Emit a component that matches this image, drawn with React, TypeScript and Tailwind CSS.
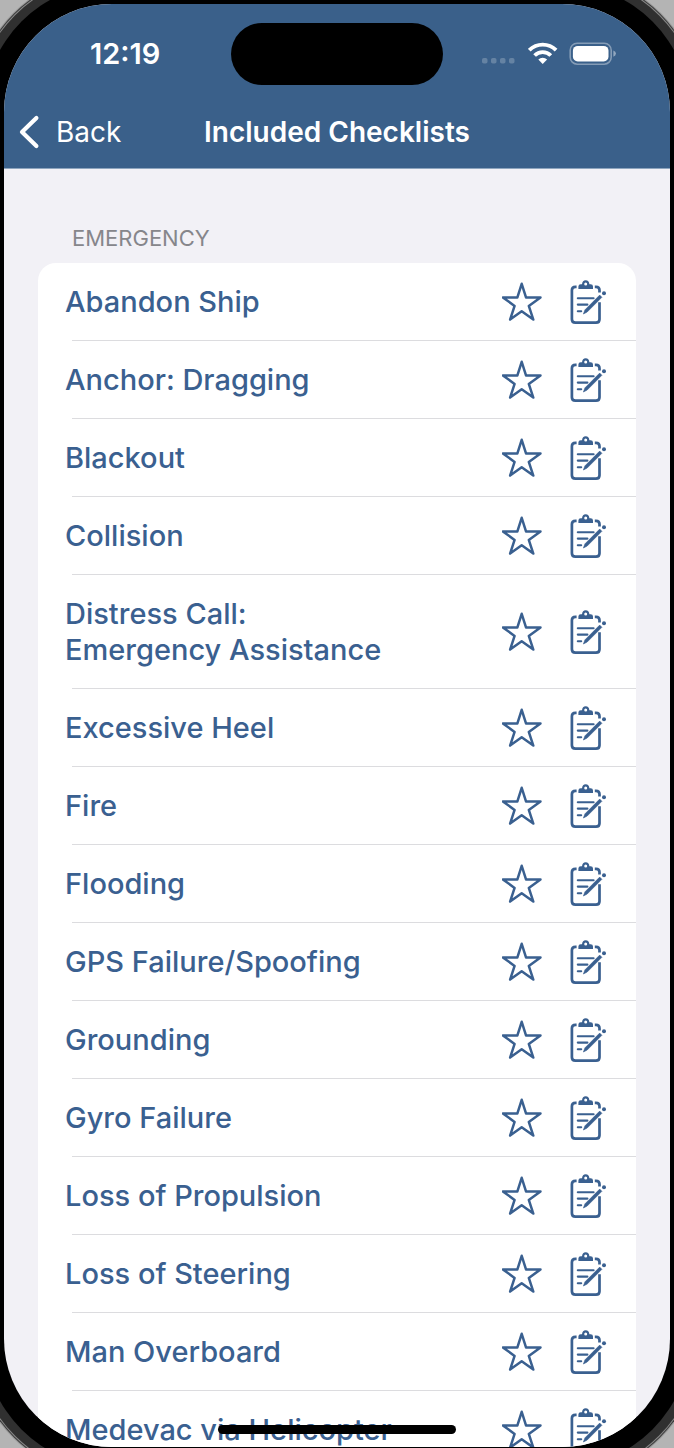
const checklists: string[] = [
  "Abandon Ship",
  "Anchor: Dragging",
  "Blackout",
  "Collision",
  "Distress Call:\nEmergency Assistance",
  "Excessive Heel",
  "Fire",
  "Flooding",
  "GPS Failure/Spoofing",
  "Grounding",
  "Gyro Failure",
  "Loss of Propulsion",
  "Loss of Steering",
  "Man Overboard",
  "Medevac via Helicopter",
];

function StarIcon() {
  return (
    <svg viewBox="0 0 40 40" className="size-10" fill="none" stroke="currentColor" strokeWidth="2.5" strokeLinejoin="round" aria-hidden="true">
      <path d="M19.7 1.8 24 15.4H38.5L26.8 23.9 31.3 37.6 19.7 29.2 8.1 37.6 12.6 23.9 0.9 15.4H15.4Z" />
    </svg>
  );
}

function ClipboardIcon() {
  return (
    <svg viewBox="0 0 40 48" className="h-12 w-10" fill="none" stroke="currentColor" strokeWidth="2.7" strokeLinecap="butt" aria-hidden="true">
      <path d="M8.6 8.8H7.4Q3.9 8.8 3.9 12.3V41.2Q3.9 44.7 7.4 44.7H28Q31.5 44.7 31.5 41.2V24.2M26.8 8.8H28Q31.5 8.8 31.5 12.3V14.6" />
      <path
        d="M10.4 11V8.6Q10.4 6.2 12.8 6.2H14Q14.4 2.2 17.7 2.2T21.4 6.2H22.6Q25 6.2 25 8.6V11ZM17.7 4.5A1.5 1.5 0 1 0 17.7 7.5 1.5 1.5 0 1 0 17.7 4.5Z"
        fill="currentColor"
        fillRule="evenodd"
        stroke="none"
      />
      <path d="M9.8 20.2H25.6M9.8 26.6H19.4M9.8 33.2H13.2" strokeWidth="2.1" strokeLinecap="round" />
      <path d="M15.4 36 17 31.8 31.7 17.1 33.9 19.3 19.2 34Z" fill="currentColor" strokeWidth="0.6" strokeLinejoin="round" />
      <circle cx="36" cy="15.2" r="2" fill="currentColor" stroke="none" />
    </svg>
  );
}

function StatusIcons() {
  return (
    <div className="flex items-center">
      <svg viewBox="0 0 34 24" className="h-6 w-[34px]" fill="#fff" fillOpacity="0.22" aria-hidden="true">
        <rect x="0" y="16" width="5.5" height="5.5" rx="1.8" />
        <rect x="9" y="16" width="5.5" height="5.5" rx="1.8" />
        <rect x="18" y="16" width="5.5" height="5.5" rx="1.8" />
        <rect x="27" y="16" width="5.5" height="5.5" rx="1.8" />
      </svg>
      <svg viewBox="0 0 30 24" className="ml-3 h-6 w-[30px]" fill="none" stroke="#fff" strokeWidth="3.8" aria-hidden="true">
        <path d="M1.3 8.2A19 19 0 0 1 28.1 8.2" />
        <path d="M6.6 13.5A11.4 11.4 0 0 1 22.8 13.5" />
        <path d="M10.3 17.4A6.4 6.4 0 0 1 19.1 17.4L14.7 21.9Z" fill="#fff" stroke="none" />
      </svg>
      <svg viewBox="0 0 48 24" className="ml-[11px] h-6 w-12" aria-hidden="true">
        <rect x="1.2" y="1.2" width="41" height="21" rx="7" fill="none" stroke="#fff" strokeOpacity="0.38" strokeWidth="1.6" />
        <rect x="3.9" y="3.9" width="35.6" height="15.6" rx="4.8" fill="#fff" />
        <path d="M44.4 8.5Q46.9 9.3 46.9 11.6T44.4 14.8Z" fill="#fff" fillOpacity="0.45" />
      </svg>
    </div>
  );
}

function ChecklistRow({ name }: { name: string }) {
  return (
    <li className="group">
      <div className="flex items-center pt-[21px] pr-7 pb-5 pl-[27px] text-[#3a6090]">
        <a href="#checklist" className="min-w-0 flex-1 whitespace-pre-line text-[29px] leading-9 font-medium">
          {name}
        </a>
        <button type="button" aria-label="Add to favorites" className="-my-2 shrink-0">
          <StarIcon />
        </button>
        <button type="button" aria-label="Edit checklist" className="-my-2 ml-[26px] shrink-0">
          <ClipboardIcon />
        </button>
      </div>
      <div className="ml-[34px] h-px bg-[#dcdcdf] group-last:bg-transparent" />
    </li>
  );
}

export default function App() {
  return (
    <div className="flex h-screen flex-col overflow-hidden bg-[#b4b4b4] px-1 pt-1 pb-px font-['Inter',sans-serif]">
      <div className="relative flex min-h-0 flex-1 flex-col overflow-hidden rounded-[108px] bg-[#f2f1f6] shadow-[0_0_0_20px_#000,0_0_0_29px_#303030,0_0_0_30px_#8a8a8a,0_0_0_31px_#3c3c3c,0_0_0_32px_#999]">
        <header className="shrink-0 border-b border-[#8ea5be] bg-[#3a608a] text-white">
          <div className="grid h-[100px] grid-cols-[1fr_212px_1fr] items-center">
            <time className="pl-[86px] text-[29px] leading-9 font-semibold">12:19</time>
            <div className="h-[62px] rounded-full bg-black" />
            <div className="flex justify-end pr-[53px]">
              <StatusIcons />
            </div>
          </div>
          <nav className="grid h-14 grid-cols-[1fr_auto_1fr] items-center">
            <button type="button" className="flex items-center gap-4 pl-[14px] text-[28px] leading-9">
              <svg viewBox="0 0 22 34" className="h-[34px] w-[22px]" fill="none" stroke="currentColor" strokeWidth="4.2" strokeLinecap="round" strokeLinejoin="round" aria-hidden="true">
                <path d="M18.4 3 4 17 18.4 31" />
              </svg>
              Back
            </button>
            <h1 className="text-[28px] leading-9 font-semibold">Included Checklists</h1>
          </nav>
          <div className="h-2" />
        </header>
        <main className="min-h-0 flex-1 overflow-y-auto px-[34px] pt-[55px] [scrollbar-width:none]">
          <h2 className="pb-[11px] pl-[34px] text-[22px] leading-7 font-normal text-[#86868b]">EMERGENCY</h2>
          <ul className="rounded-[18px] bg-white">
            {checklists.map((name) => (
              <ChecklistRow key={name} name={name} />
            ))}
          </ul>
        </main>
        <div className="absolute bottom-[13px] left-1/2 h-[9px] w-[238px] -translate-x-1/2 rounded-full bg-black" />
      </div>
    </div>
  );
}
